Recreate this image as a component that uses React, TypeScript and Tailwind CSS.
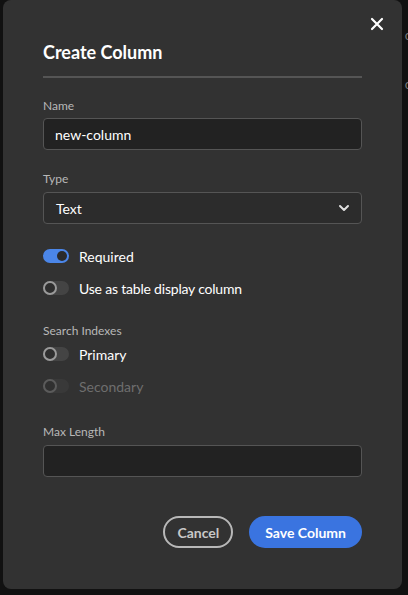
import React from "react";

function Toggle({ on, disabled }: { on?: boolean; disabled?: boolean }) {
  if (on) {
    return (
      <div className="w-[26px] h-[14px] rounded-full bg-[#4b86e8] relative shrink-0">
        <div className="absolute right-[2px] top-[2px] w-[10px] h-[10px] rounded-full bg-[#2b2b2b]" />
      </div>
    );
  }
  return (
    <div className={`w-[26px] h-[14px] rounded-full bg-[#444444] relative shrink-0 ${disabled ? "opacity-40" : ""}`}>
      <div className="absolute left-0 top-0 w-[14px] h-[14px] rounded-full border-2 border-[#9a9a9a] bg-[#2e2e2e]" />
    </div>
  );
}

export default function App() {
  return (
    <div className="w-[408px] h-[595px] bg-[#111111] overflow-hidden relative" style={{ fontFamily: "Lato, 'Noto Sans', sans-serif" }}>
      <div className="absolute right-[-4px] top-[26px] text-[#777] text-[13px]">o</div>
      <div className="absolute right-[-4px] top-[75px] text-[#777] text-[13px]">o</div>
      <div className="ml-[3px] w-[399px] h-[589px] rounded-[8px] bg-[#323232] relative px-[40px] pt-[40px]">
        <button className="absolute right-[18px] top-[17px] text-white">
          <svg width="14" height="14" viewBox="0 0 14 14" fill="none" stroke="white" strokeWidth="2.2" strokeLinecap="round">
            <path d="M2 2 L12 12 M12 2 L2 12" />
          </svg>
        </button>
        <h1 className="text-[18px] font-bold text-white leading-[24px]">Create Column</h1>
        <div className="mt-[12px] h-[2px] bg-[#555555]" />

        <div className="mt-[20px] text-[12px] text-[#b8b8b8] leading-[16px]">Name</div>
        <div className="mt-[4px] h-[32px] rounded-[4px] border border-[#555555] bg-[#222222] flex items-center px-[11px] text-[14px] text-white">
          new-column
        </div>

        <div className="mt-[21px] text-[12px] text-[#b8b8b8] leading-[16px]">Type</div>
        <div className="mt-[5px] h-[32px] rounded-[4px] border border-[#555555] bg-[#2c2c2c] flex items-center justify-between pl-[12px] pr-[11px] text-[14px] text-white">
          <span>Text</span>
          <svg width="12" height="8" viewBox="0 0 12 8" fill="none" stroke="#e0e0e0" strokeWidth="2" strokeLinecap="round" strokeLinejoin="round">
            <path d="M2 2 L6 6 L10 2" />
          </svg>
        </div>

        <div className="mt-[22px] flex items-center gap-[10px] h-[20px]">
          <Toggle on />
          <span className="text-[14px] text-white">Required</span>
        </div>
        <div className="mt-[12px] flex items-center gap-[10px] h-[20px]">
          <Toggle />
          <span className="text-[14px] text-white tracking-[-0.2px]">Use as table display column</span>
        </div>

        <div className="mt-[25px] text-[12px] text-[#b8b8b8] leading-[16px]">Search Indexes</div>
        <div className="mt-[5px] flex items-center gap-[10px] h-[20px]">
          <Toggle />
          <span className="text-[14px] text-white">Primary</span>
        </div>
        <div className="mt-[12px] flex items-center gap-[10px] h-[20px]">
          <Toggle disabled />
          <span className="text-[14px] text-[#6e6e6e]">Secondary</span>
        </div>

        <div className="mt-[28px] text-[12px] text-[#b8b8b8] leading-[16px]">Max Length</div>
        <div className="mt-[5px] h-[32px] rounded-[4px] border border-[#555555] bg-[#222222]" />

        <div className="mt-[39px] flex justify-end gap-[16px]">
          <button className="h-[32px] px-[12px] rounded-full border-2 border-[#b8b8b8] text-[#c8c8c8] text-[14px] font-bold">
            Cancel
          </button>
          <button className="h-[32px] px-[16px] rounded-full bg-[#3a74e0] text-white text-[14px] font-bold">
            Save Column
          </button>
        </div>
      </div>
    </div>
  );
}
